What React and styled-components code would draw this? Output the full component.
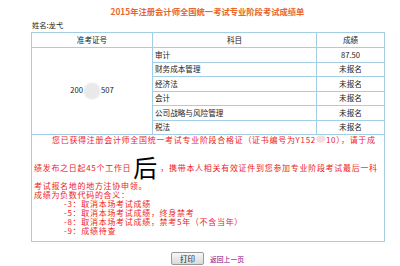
import React from "react";
import styled, { createGlobalStyle } from "styled-components";

const Global = createGlobalStyle`
  html, body { margin: 0; padding: 0; background: #fff; }
  body { font-family: "Noto Sans CJK SC", "Noto Sans", sans-serif; }
`;

const Page = styled.div`
  width: 353px;
  margin-left: 31px;
`;

const Title = styled.h1`
  margin: 0;
  height: 18px;
  line-height: 22px;
  text-align: center;
  font-size: 8.3px;
  font-weight: bold;
  color: #e8662e;
  white-space: nowrap;
`;

const Name = styled.div`
  height: 14px;
  line-height: 14px;
  font-size: 7.3px;
  color: #222;
  padding-left: 1px;
`;

const Table = styled.table`
  width: 353px;
  border-collapse: collapse;
  table-layout: fixed;
  font-size: 7.6px;
  color: #222;
`;

const Cell = styled.td`
  border: 1px solid #a3cfe6;
  padding: 0 2px;
  height: ${(p) => p.$h || 13.5}px;
  line-height: 10px;
  text-align: ${(p) => p.$align || "left"};
  vertical-align: middle;
  white-space: nowrap;
  overflow: hidden;
`;

const Blur = styled.span`
  display: inline-block;
  width: ${(p) => p.$w}px;
  height: ${(p) => p.$h}px;
  vertical-align: ${(p) => p.$valign || "middle"};
  background: radial-gradient(ellipse at center, ${(p) => p.$c} 55%, rgba(255, 255, 255, 0) 75%);
`;

const Notice = styled.td`
  border: 1px solid #a3cfe6;
  padding: 0 2px 6px;
  color: #ee1c1c;
  font-size: 8px;
  letter-spacing: 0.7px;
  line-height: 9px;
  text-align: left;
  vertical-align: top;
`;

const Line = styled.div`
  white-space: nowrap;
  height: 9px;
  padding-left: ${(p) => p.$indent || 0}px;
`;

const BigLine = styled.div`
  white-space: nowrap;
  height: 37px;
  box-sizing: border-box;
  padding-top: 9px;
  display: flex;
  align-items: center;
`;

const Big = styled.span`
  font-size: 24px;
  line-height: 24px;
  letter-spacing: 0;
  color: #000;
  margin: 0 3px 0 2px;
`;

const Actions = styled.div`
  display: flex;
  justify-content: center;
  align-items: center;
  gap: 6px;
  margin-top: 10px;
`;

const Button = styled.button`
  width: 33px;
  height: 13px;
  padding: 0;
  border: 1px solid #9a9a9a;
  border-radius: 2px;
  background: linear-gradient(#f7f7f7, #dadada);
  font-family: inherit;
  font-size: 7.5px;
  line-height: 11px;
  color: #222;
`;

const Back = styled.a`
  color: #800080;
  font-size: 6.8px;
  text-decoration: none;
`;

const subjects = [
  ["审计", "87.50"],
  ["财务成本管理", "未报名"],
  ["经济法", "未报名"],
  ["会计", "未报名"],
  ["公司战略与风险管理", "未报名"],
  ["税法", "未报名"],
];

export default function App() {
  return (
    <>
      <Global />
      <Page>
        <Title>2015年注册会计师全国统一考试专业阶段考试成绩单</Title>
        <Name>姓名:龙弋</Name>
        <Table>
          <colgroup>
            <col style={{ width: "121px" }} />
            <col style={{ width: "164px" }} />
            <col style={{ width: "68px" }} />
          </colgroup>
          <tbody>
            <tr>
              <Cell $align="center" $h={14}>准考证号</Cell>
              <Cell $align="center" $h={14}>科目</Cell>
              <Cell $align="center" $h={14}>成绩</Cell>
            </tr>
            {subjects.map(([s, score], i) => (
              <tr key={s}>
                {i === 0 && (
                  <Cell rowSpan={6} $align="center">
                    200
                    <Blur $w={18} $h={18} $c="#e9e9e9" />
                    507
                  </Cell>
                )}
                <Cell>{s}</Cell>
                <Cell $align="center">{score}</Cell>
              </tr>
            ))}
            <tr>
              <Notice colSpan={3}>
                <Line $indent={18}>
                  您已获得注册会计师全国统一考试专业阶段合格证（证书编号为Y152
                  <Blur $w={10} $h={8} $valign="top" $c="#f6dcdc" />
                  10），请于成
                </Line>
                <BigLine>
                  绩发布之日起45个工作日<Big>后</Big>，携带本人相关有效证件到您参加专业阶段考试最后一科
                </BigLine>
                <Line>考试报名地的地方注协申领。</Line>
                <Line>成绩为负数代码的含义：</Line>
                <Line $indent={30}>-3：取消本场考试成绩</Line>
                <Line $indent={30}>-5：取消本场考试成绩，终身禁考</Line>
                <Line $indent={30}>-8：取消本场考试成绩，禁考5年（不含当年）</Line>
                <Line $indent={30}>-9：成绩待查</Line>
              </Notice>
            </tr>
          </tbody>
        </Table>
        <Actions>
          <Button type="button">打印</Button>
          <Back href="#">返回上一页</Back>
        </Actions>
      </Page>
    </>
  );
}
